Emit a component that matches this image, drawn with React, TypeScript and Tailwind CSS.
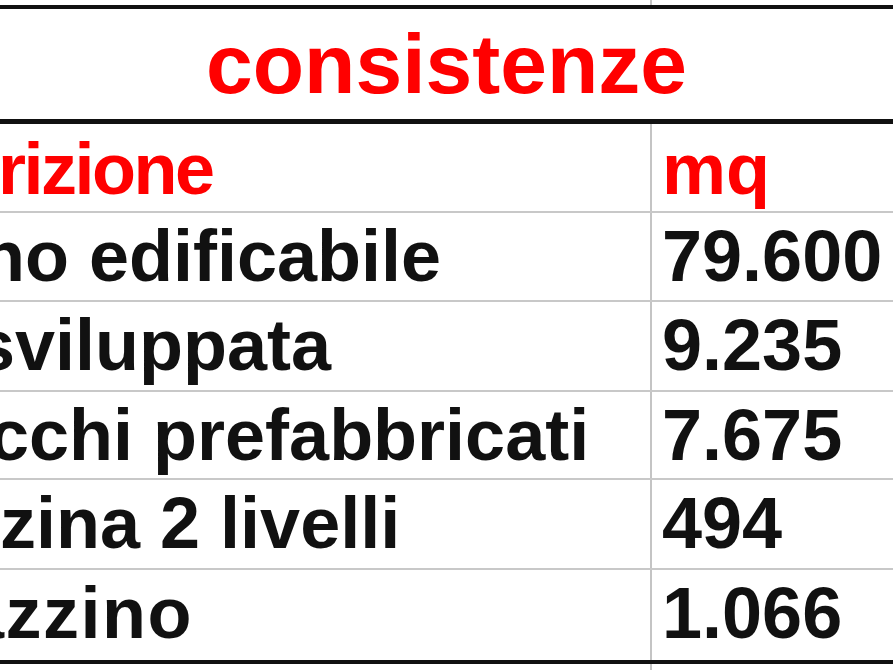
type Row = { label: string; indent: string; value: string; height: string };

const rows: Row[] = [
  { label: "no edificabile", indent: "-ml-[19px]", value: "79.600", height: "h-[89px]" },
  { label: "sviluppata", indent: "-ml-[25px]", value: "9.235", height: "h-[90px]" },
  { label: "cchi prefabbricati", indent: "-ml-[11px]", value: "7.675", height: "h-[88px]" },
  { label: "zina 2 livelli", indent: "ml-0", value: "494", height: "h-[90px]" },
  { label: "azzino", indent: "-ml-[36px] tracking-[1.5px]", value: "1.066", height: "h-[90px]" },
];

export default function App() {
  return (
    <main className="flex h-[670px] w-[893px] flex-col overflow-hidden bg-white font-['Liberation_Sans',Arial,sans-serif] font-bold">
      <div className="grid h-[5px] grid-cols-[650px_1fr]">
        <div />
        <div className="border-l-2 border-[#c4c4c4]" />
      </div>
      <div className="h-[4px] bg-[#111]" />
      <section className="h-[110px] pt-[13px] text-center text-[84px] leading-none text-[#f00]">consistenze</section>
      <div className="h-[5px] bg-[#111]" />

      <div className="grid h-[89px] grid-cols-[650px_1fr] border-b-2 border-[#c8c8c8] text-[72px] leading-none text-[#f00]">
        <div className="overflow-hidden whitespace-nowrap pt-[9px]">
          <span className="inline-block -ml-[2px] tracking-[-2.5px]">rizione</span>
        </div>
        <div className="border-l-2 border-[#c4c4c4] pl-[10px] pt-[9px]">mq</div>
      </div>

      {rows.map((row, i) => (
        <div
          key={row.value}
          className={`grid ${row.height} grid-cols-[650px_1fr] text-[72px] leading-none text-[#111] ${i < rows.length - 1 ? "border-b-2 border-[#c8c8c8]" : ""}`}
        >
          <div className="overflow-hidden whitespace-nowrap pt-[7px]">
            <span className={`inline-block ${row.indent}`}>{row.label}</span>
          </div>
          <div className="border-l-2 border-[#c4c4c4] pl-[10px] pt-[7px]">{row.value}</div>
        </div>
      ))}

      <div className="h-[4px] bg-[#111]" />
      <div className="grid flex-1 grid-cols-[650px_1fr]">
        <div />
        <div className="border-l-2 border-[#c4c4c4]" />
      </div>
    </main>
  );
}
